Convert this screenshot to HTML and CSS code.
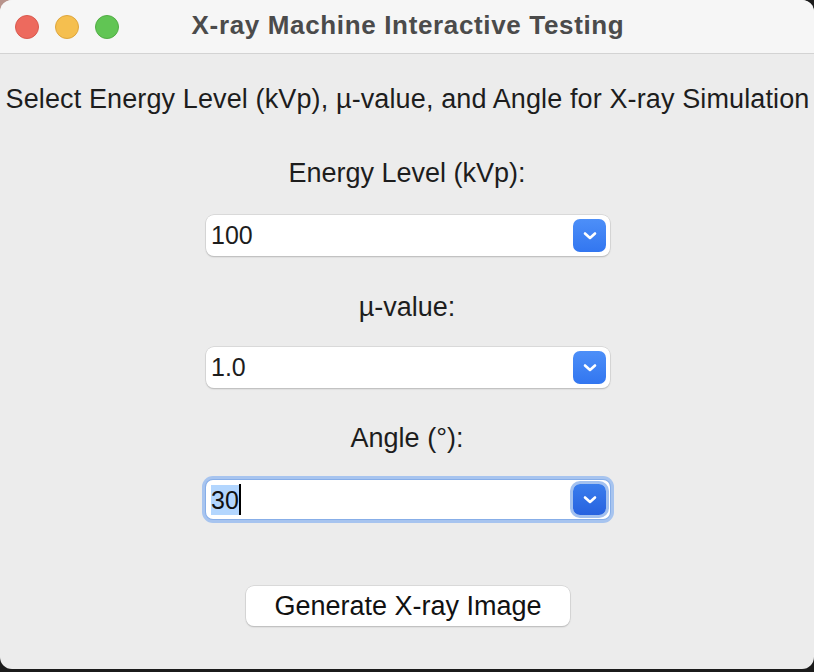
FILE: index.html
```html
<!DOCTYPE html>
<html>
<head>
<meta charset="utf-8">
<link rel="stylesheet" href="styles.css">
</head>
<body>
<div class="window">
  <div class="titlebar">
    <div class="lights">
      <span class="light red"></span>
      <span class="light yellow"></span>
      <span class="light green"></span>
    </div>
    <div class="title">X-ray Machine Interactive Testing</div>
  </div>
  <div class="content">
    <div class="heading">Select Energy Level (kVp), µ-value, and Angle for X-ray Simulation</div>
    <div class="label l1">Energy Level (kVp):</div>
    <div class="combo c1">
      <span class="value">100</span>
      <span class="arrow"><svg width="16" height="10" viewBox="0 0 16 10"><polyline points="3,2.5 8,7 13,2.5" fill="none" stroke="#fff" stroke-width="2.6" stroke-linecap="round" stroke-linejoin="round"/></svg></span>
    </div>
    <div class="label l2">µ-value:</div>
    <div class="combo c2">
      <span class="value">1.0</span>
      <span class="arrow"><svg width="16" height="10" viewBox="0 0 16 10"><polyline points="3,2.5 8,7 13,2.5" fill="none" stroke="#fff" stroke-width="2.6" stroke-linecap="round" stroke-linejoin="round"/></svg></span>
    </div>
    <div class="label l3">Angle (°):</div>
    <div class="combo c3 focused">
      <span class="value"><span class="sel">30</span><span class="caret"></span></span>
      <span class="arrow dark"><svg width="16" height="10" viewBox="0 0 16 10"><polyline points="3,2.5 8,7 13,2.5" fill="none" stroke="#fff" stroke-width="2.6" stroke-linecap="round" stroke-linejoin="round"/></svg></span>
    </div>
    <button class="btn">Generate X-ray Image</button>
  </div>
</div>
</body>
</html>
```

FILE: styles.css
```css
html, body {
  margin: 0;
  padding: 0;
}
body {
  width: 814px;
  height: 672px;
  background: linear-gradient(135deg, #b8948c 0, #b8948c 12px, #1b1b1b 13px);
  font-family: "Liberation Sans", Arial, sans-serif;
  overflow: hidden;
}
.window {
  width: 814px;
  height: 669px;
  border-radius: 12px;
  background: #ececec;
  overflow: hidden;
  display: flex;
  flex-direction: column;
}
.titlebar {
  height: 53px;
  flex: none;
  background: #f6f6f6;
  border-bottom: 1px solid #d3d3d3;
  display: flex;
  align-items: center;
  position: relative;
}
.lights {
  display: flex;
  gap: 16px;
  padding-left: 15px;
  margin-top: 1px;
}
.light {
  width: 24px;
  height: 24px;
  border-radius: 50%;
  box-sizing: border-box;
}
.red { background: #ed6a5e; border: 1px solid #d95a4f; }
.yellow { background: #f5bf4f; border: 1px solid #dea63d; }
.green { background: #61c554; border: 1px solid #52ad45; }
.title {
  position: absolute;
  left: 0;
  right: 0;
  top: 0;
  line-height: 50px;
  text-align: center;
  font-weight: bold;
  font-size: 26px;
  letter-spacing: 0.65px;
  color: #4b4b4b;
  padding-left: 2px;
}
.content {
  display: flex;
  flex-direction: column;
  align-items: center;
  color: #1d1d1d;
}
.heading {
  margin-top: 30px;
  font-size: 27px;
  line-height: 30px;
  letter-spacing: 0.12px;
  white-space: nowrap;
  padding-left: 1px;
}
.label {
  font-size: 27px;
  line-height: 30px;
}
.l1 { margin-top: 44px; }
.l2 { margin-top: 36px; }
.l3 { margin-top: 35px; }
.combo {
  width: 404px;
  height: 41px;
  box-sizing: border-box;
  background: #fff;
  border-radius: 8px;
  box-shadow: 0 0 0 0.5px #c8c8c8, 0 1px 1.5px rgba(0,0,0,0.25);
  display: flex;
  align-items: center;
  justify-content: space-between;
  padding: 0 4px 0 5px;
  margin-left: 2px;
}
.c1 { margin-top: 27px; }
.c2 { margin-top: 25px; }
.c3 {
  margin-top: 27px;
  height: 39px;
  box-shadow: 0 0 0 1px #87aee8, 0 0 0 4px #a7c4ef;
  border-radius: 7px;
}
.value {
  font-size: 25px;
  color: #1d1d1d;
  display: flex;
  align-items: center;
}
.sel {
  background: #b3d6fe;
  color: #111;
  line-height: 30px;
}
.caret {
  width: 2px;
  height: 31px;
  background: #000;
}
.arrow {
  width: 33px;
  height: 33px;
  border-radius: 7px;
  background: linear-gradient(#4d8ff8, #3276f0);
  display: flex;
  align-items: center;
  justify-content: center;
}
.arrow svg { display: block; }
.arrow.dark {
  background: linear-gradient(#3a7ded, #2762df);
  box-shadow: 0 0 0 3px #a3c1ef;
  height: 31px;
}
.btn {
  margin-top: 67px;
  width: 324px;
  height: 40px;
  border: none;
  border-radius: 8px;
  background: #fff;
  box-shadow: 0 0 0 0.5px #c8c8c8, 0 1px 1.5px rgba(0,0,0,0.25);
  font-family: "Liberation Sans", Arial, sans-serif;
  font-size: 27px;
  color: #111;
  padding: 0;
  margin-left: 2px;
}
```
